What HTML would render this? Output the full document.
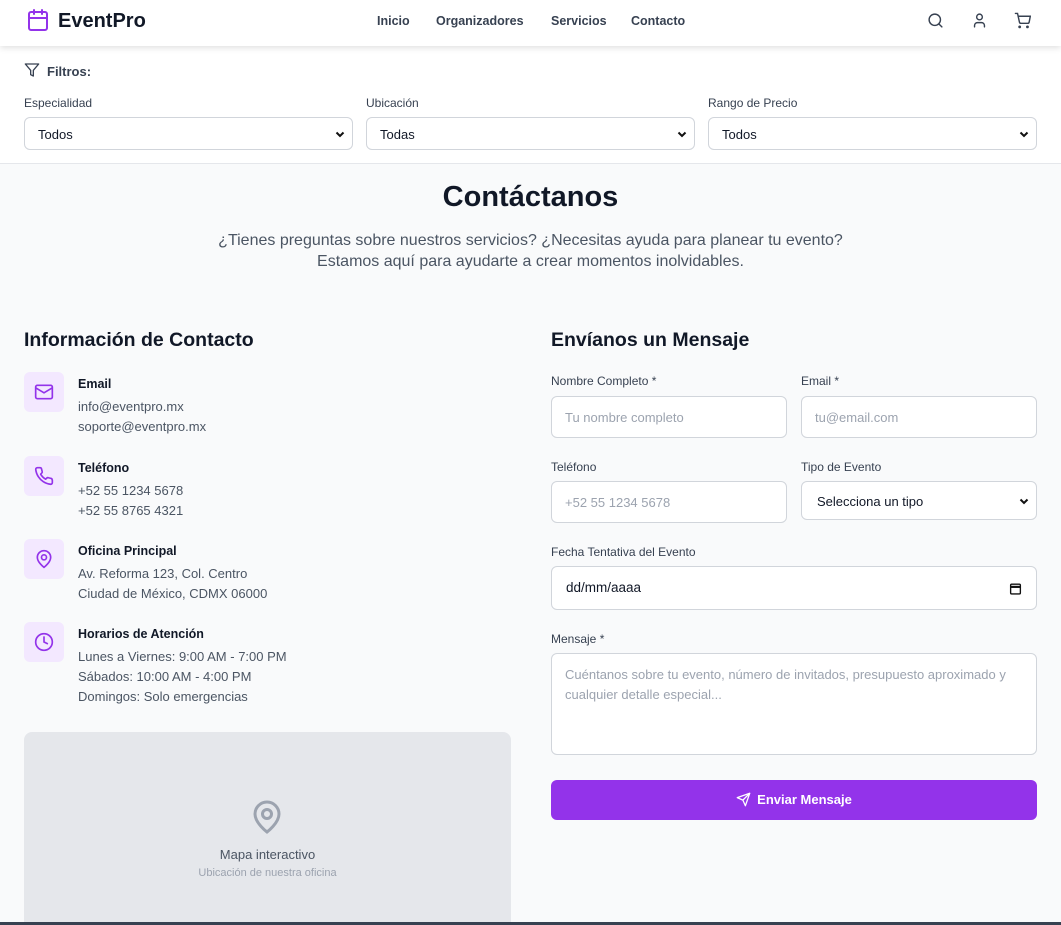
<!DOCTYPE html>
<html style="width:1061px;height:925px;overflow:hidden"><head><meta charset="utf-8"><style>
*{box-sizing:border-box;margin:0;padding:0}
body{width:1061px;height:925px;overflow:hidden;background:#f9fafb;font-family:"Liberation Sans",sans-serif;color:#111827;position:relative}
.abs{position:absolute}
header{position:absolute;left:0;top:0;width:1061px;height:46px;background:#fff;box-shadow:0 2px 6px rgba(0,0,0,.12);z-index:2}
.filters{position:absolute;left:0;top:46px;width:1061px;height:118px;background:#fff;border-bottom:1px solid #e5e7eb}
.sel{position:absolute;height:33px;border:1px solid #d1d5db;border-radius:6px;background:#fff;font-size:13px;padding:9px 13px;color:#111827}
.sel svg{position:absolute;right:6px;top:10px}
.lab{position:absolute;font-size:12px;color:#374151}
.inp{position:absolute;height:42px;border:1px solid #d1d5db;border-radius:6px;background:#fff;font-size:13px;color:#9ca3af;padding:13px 13px}
.ib{position:absolute;left:24px;width:40px;height:40px;background:#f3e8ff;border-radius:6px}
.ib svg{position:absolute;left:10px;top:10px}
.it{position:absolute;left:78px;font-size:13px;color:#4b5563;line-height:20px}
.it b{display:block;color:#111827;font-size:12.5px;margin-bottom:3px}
</style></head><body>
<header>
<svg class="abs" style="left:26px;top:8px" width="24" height="24" viewBox="0 0 24 24" fill="none" stroke="#9333ea" stroke-width="2" stroke-linecap="round"><rect x="3" y="4" width="18" height="18" rx="2"/><path d="M16 2v4M8 2v4M3 10h18"/></svg>
<div class="abs" style="left:58px;top:10px;font-size:20px;font-weight:bold">EventPro</div>
<div class="abs" style="left:377px;top:14px;font-size:12.5px;color:#374151;font-weight:bold">Inicio</div>
<div class="abs" style="left:436px;top:14px;font-size:12.5px;color:#374151;font-weight:bold">Organizadores</div>
<div class="abs" style="left:551px;top:14px;font-size:12.5px;color:#374151;font-weight:bold">Servicios</div>
<div class="abs" style="left:631px;top:14px;font-size:12.5px;color:#374151;font-weight:bold">Contacto</div>
<svg class="abs" style="left:927px;top:12px" width="17" height="17" viewBox="0 0 24 24" fill="none" stroke="#374151" stroke-width="2" stroke-linecap="round"><circle cx="11" cy="11" r="8"/><path d="m21 21-4.3-4.3"/></svg>
<svg class="abs" style="left:971px;top:12px" width="17" height="17" viewBox="0 0 24 24" fill="none" stroke="#374151" stroke-width="2" stroke-linecap="round"><circle cx="12" cy="7" r="4"/><path d="M19 21v-2a4 4 0 0 0-4-4H9a4 4 0 0 0-4 4v2"/></svg>
<svg class="abs" style="left:1014px;top:12px" width="17" height="17" viewBox="0 0 24 24" fill="none" stroke="#374151" stroke-width="2" stroke-linecap="round"><circle cx="8" cy="21" r="1"/><circle cx="19" cy="21" r="1"/><path d="M2 2h3l2.7 12.4a2 2 0 0 0 2 1.6h9.7a2 2 0 0 0 2-1.6L23 6H6"/></svg>
</header>
<div class="filters"></div>
<svg class="abs" style="left:24px;top:62px" width="16" height="16" viewBox="0 0 24 24" fill="none" stroke="#374151" stroke-width="2" stroke-linejoin="round"><path d="M22 3H2l8 9.5V19l4 2v-8.5z"/></svg>
<div class="abs" style="left:47px;top:64px;font-size:13px;font-weight:bold;color:#374151">Filtros:</div>
<div class="lab" style="left:24px;top:96px">Especialidad</div>
<div class="lab" style="left:366px;top:96px">Ubicación</div>
<div class="lab" style="left:708px;top:96px">Rango de Precio</div>
<div class="sel" style="left:24px;top:117px;width:329px">Todos<svg width="12" height="12" viewBox="0 0 24 24" fill="none" stroke="#111" stroke-width="4"><path d="m5 9 7 7 7-7"/></svg></div>
<div class="sel" style="left:366px;top:117px;width:329px">Todas<svg width="12" height="12" viewBox="0 0 24 24" fill="none" stroke="#111" stroke-width="4"><path d="m5 9 7 7 7-7"/></svg></div>
<div class="sel" style="left:708px;top:117px;width:329px">Todos<svg width="12" height="12" viewBox="0 0 24 24" fill="none" stroke="#111" stroke-width="4"><path d="m5 9 7 7 7-7"/></svg></div>

<div class="abs" style="left:0;width:1061px;top:181px;text-align:center;font-size:29px;font-weight:bold">Contáctanos</div>
<div class="abs" style="left:0;width:1061px;top:230px;text-align:center;font-size:16px;color:#4b5563;line-height:21px">¿Tienes preguntas sobre nuestros servicios? ¿Necesitas ayuda para planear tu evento?<br>Estamos aquí para ayudarte a crear momentos inolvidables.</div>

<div class="abs" style="left:24px;top:329px;font-size:19.5px;font-weight:bold">Información de Contacto</div>
<div class="ib" style="top:372px"><svg width="20" height="20" viewBox="0 0 24 24" fill="none" stroke="#9333ea" stroke-width="2"><rect x="2" y="4" width="20" height="16" rx="2"/><path d="m22 7-10 6L2 7"/></svg></div>
<div class="it" style="top:374px"><b>Email</b>info@eventpro.mx<br>soporte@eventpro.mx</div>
<div class="ib" style="top:456px"><svg width="20" height="20" viewBox="0 0 24 24" fill="none" stroke="#9333ea" stroke-width="2" stroke-linejoin="round"><path d="M22 16.9v3a2 2 0 0 1-2.2 2 19.8 19.8 0 0 1-8.6-3.1 19.5 19.5 0 0 1-6-6A19.8 19.8 0 0 1 2.1 4.2 2 2 0 0 1 4.1 2h3a2 2 0 0 1 2 1.7c.1.9.4 1.8.7 2.7a2 2 0 0 1-.5 2.1L8 9.8a16 16 0 0 0 6 6l1.3-1.3a2 2 0 0 1 2.1-.4c.9.3 1.8.6 2.7.7a2 2 0 0 1 1.7 2z"/></svg></div>
<div class="it" style="top:458px"><b>Teléfono</b>+52 55 1234 5678<br>+52 55 8765 4321</div>
<div class="ib" style="top:539px"><svg width="20" height="20" viewBox="0 0 24 24" fill="none" stroke="#9333ea" stroke-width="2"><path d="M20 10c0 6-8 12-8 12s-8-6-8-12a8 8 0 0 1 16 0z"/><circle cx="12" cy="10" r="3"/></svg></div>
<div class="it" style="top:541px"><b>Oficina Principal</b>Av. Reforma 123, Col. Centro<br>Ciudad de México, CDMX 06000</div>
<div class="ib" style="top:622px"><svg width="20" height="20" viewBox="0 0 24 24" fill="none" stroke="#9333ea" stroke-width="2" stroke-linecap="round"><circle cx="12" cy="12" r="10"/><path d="M12 6v6l4 2"/></svg></div>
<div class="it" style="top:624px"><b>Horarios de Atención</b>Lunes a Viernes: 9:00 AM - 7:00 PM<br>Sábados: 10:00 AM - 4:00 PM<br>Domingos: Solo emergencias</div>
<div class="abs" style="left:24px;top:732px;width:487px;height:190px;background:#e5e7eb;border-radius:8px 8px 0 0"></div>
<svg class="abs" style="left:249px;top:797px" width="36" height="40" viewBox="0 0 24 24" fill="none" stroke="#9ca3af" stroke-width="2"><path d="M20 10c0 6-8 12-8 12s-8-6-8-12a8 8 0 0 1 16 0z"/><circle cx="12" cy="10" r="3"/></svg>
<div class="abs" style="left:24px;width:487px;top:847px;text-align:center;font-size:13px;color:#4b5563">Mapa interactivo</div>
<div class="abs" style="left:24px;width:487px;top:867px;text-align:center;font-size:11px;color:#9ca3af">Ubicación de nuestra oficina</div>

<div class="abs" style="left:551px;top:329px;font-size:19.5px;font-weight:bold">Envíanos un Mensaje</div>
<div class="lab" style="left:551px;top:374px">Nombre Completo *</div>
<div class="lab" style="left:801px;top:374px">Email *</div>
<div class="inp" style="left:551px;top:396px;width:236px">Tu nombre completo</div>
<div class="inp" style="left:801px;top:396px;width:236px">tu@email.com</div>
<div class="lab" style="left:551px;top:460px">Teléfono</div>
<div class="lab" style="left:801px;top:460px">Tipo de Evento</div>
<div class="inp" style="left:551px;top:481px;width:236px">+52 55 1234 5678</div>
<div class="sel" style="left:801px;top:481px;width:236px;height:39px;padding-top:12px;padding-left:15px">Selecciona un tipo<svg style="top:13px" width="12" height="12" viewBox="0 0 24 24" fill="none" stroke="#111" stroke-width="4"><path d="m5 9 7 7 7-7"/></svg></div>
<div class="lab" style="left:551px;top:545px">Fecha Tentativa del Evento</div>
<div class="inp" style="left:551px;top:566px;width:486px;height:44px;color:#111827;padding-left:14px;font-size:13.5px">dd/mm/aaaa
<svg class="abs" style="right:14px;top:15px" width="13" height="13" viewBox="0 0 24 24" fill="none" stroke="#111" stroke-width="2.5"><rect x="3" y="4" width="18" height="18" rx="2"/><path d="M3 9h18" stroke-width="4"/></svg></div>
<div class="lab" style="left:551px;top:632px">Mensaje *</div>
<div class="inp" style="left:551px;top:653px;width:486px;height:102px;line-height:20px;padding-top:11px">Cuéntanos sobre tu evento, número de invitados, presupuesto aproximado y cualquier detalle especial...</div>
<div class="abs" style="left:551px;top:780px;width:486px;height:40px;background:#9333ea;border-radius:6px;color:#fff;font-size:13px;font-weight:bold;text-align:center;line-height:40px"><svg style="vertical-align:-3px;margin-right:6px" width="15" height="15" viewBox="0 0 24 24" fill="none" stroke="#fff" stroke-width="2" stroke-linejoin="round"><path d="m22 2-7 20-4-9-9-4z"/><path d="M22 2 11 13"/></svg>Enviar Mensaje</div>
<div class="abs" style="left:0;top:922px;width:1061px;height:3px;background:#374151"></div>
</body></html>
